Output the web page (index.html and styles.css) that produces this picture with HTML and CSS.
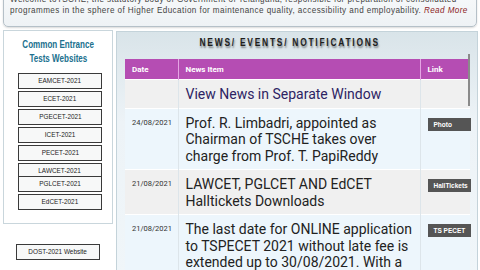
FILE: index.html
```html
<!DOCTYPE html>
<html lang="en">
<head>
  <meta charset="UTF-8" />
  <meta name="viewport" content="width=device-width, initial-scale=1.0" />
  <title>TSCHE - News</title>
  <link rel="stylesheet" href="styles.css">
</head>
<body>

<div class="welcome">
  <p>Welcome toTSCHE, the statutory body of Government of Telangana, responsible for preparation of consolidated<br>programmes in the sphere of Higher Education for maintenance quality, accessibility and employability. <a href="#" class="read-more">Read More</a></p>
</div>

<div class="page">
  <aside class="side">
    <div class="cet-box">
      <h3><span>Common Entrance</span><br><span>Tests Websites</span></h3>
      <a href="#" class="cet-btn"><span>EAMCET-2021</span></a>
      <a href="#" class="cet-btn"><span>ECET-2021</span></a>
      <a href="#" class="cet-btn"><span>PGECET-2021</span></a>
      <a href="#" class="cet-btn"><span>ICET-2021</span></a>
      <a href="#" class="cet-btn"><span>PECET-2021</span></a>
      <a href="#" class="cet-btn lawcet"><span>LAWCET-2021</span></a>
      <a href="#" class="cet-btn"><span>PGLCET-2021</span></a>
      <a href="#" class="cet-btn"><span>EdCET-2021</span></a>
    </div>
    <a href="#" class="cet-btn dost"><span>DOST-2021 Website</span></a>
  </aside>

  <main class="news">
    <h2><span>NEWS/ EVENTS/ NOTIFICATIONS</span></h2>
    <div class="news-scroll">
      <table>
        <colgroup>
          <col class="col-date">
          <col>
          <col class="col-link">
        </colgroup>
        <thead>
          <tr>
            <th>Date</th>
            <th>News Item</th>
            <th>Link</th>
          </tr>
        </thead>
        <tbody>
          <tr class="row-gray">
            <td></td>
            <td class="item"><a href="#" class="separate">View News in Separate Window</a></td>
            <td></td>
          </tr>
          <tr class="row-blue">
            <td class="date">24/08/2021</td>
            <td class="item">Prof. R. Limbadri, appointed as Chairman of TSCHE takes over charge from Prof. T. PapiReddy</td>
            <td class="link"><a href="#" class="badge">Photo</a></td>
          </tr>
          <tr class="row-gray">
            <td class="date">21/08/2021</td>
            <td class="item">LAWCET, PGLCET AND EdCET Halltickets Downloads</td>
            <td class="link"><a href="#" class="badge">HallTickets</a></td>
          </tr>
          <tr class="row-blue">
            <td class="date">21/08/2021</td>
            <td class="item">The last date for ONLINE application to TSPECET 2021 without late fee is extended up to 30/08/2021. With a late fee of Rs.500/- up to 02/09/2021.</td>
            <td class="link"><a href="#" class="badge">TS PECET</a></td>
          </tr>
        </tbody>
      </table>
      <span class="scroll-thumb"></span>
    </div>
  </main>
</div>

</body>
</html>
```

FILE: styles.css
```css
html,
body {
  margin: 0;
  height: 270px;
  overflow: hidden;
}

body {
  background: #ffffff;
  font-family: 'Liberation Sans', Arial, sans-serif;
}

/* top welcome strip (scrolled, so its first line is cut) */
.welcome {
  margin: -12px 3px 0;
  padding: 4px 8px 11px 6px;
  border: 1px solid #b5c0c8;
  border-radius: 0 0 5px 5px;
  background: linear-gradient(#f8fafb, #eef2f5);
  box-shadow: 0 1px 2px rgba(0, 0, 0, 0.15);
  overflow: hidden;
}

.welcome p {
  margin: 0;
  font-size: 9.5px;
  line-height: 11px;
  letter-spacing: 0.5px;
  color: #444;
  white-space: nowrap;
  transform: scaleX(0.853);
  transform-origin: left center;
}

.read-more {
  color: #8b2323;
  font-style: italic;
  text-decoration: none;
}

.page {
  display: flex;
  gap: 3px;
  padding: 3px 2px 0 3px;
}

.side {
  width: 110px;
  flex: none;
}

.cet-box {
  border: 1px solid #c9d6dc;
  background: #ffffff;
  padding: 6px 10px 11px 14px;
}

.cet-box h3 {
  margin: 0 -10px 8px -14px;
  font-size: 11.5px;
  line-height: 14px;
  text-align: center;
  white-space: nowrap;
  color: #20708e;
}

.cet-box h3 span,
.cet-btn span,
.news h2 span {
  display: inline-block;
}

.cet-box h3 span {
  transform: scaleX(0.7);
}

.cet-btn {
  display: block;
  width: 84px;
  height: 16px;
  box-sizing: border-box;
  margin-bottom: 2px;
  border: 1px solid #3a3a3a;
  background: #f7f8f8;
  font-size: 8px;
  line-height: 14px;
  text-align: center;
  white-space: nowrap;
  color: #222;
  text-decoration: none;
}

.cet-btn span {
  transform: scaleX(0.8);
}

.cet-btn.lawcet {
  margin-bottom: -3px;
}

.cet-btn.dost {
  margin: 20px 0 0 13px;
}

/* news panel */
.news {
  flex: 1;
  margin-top: 1px;
  border: 1px solid #c4d3da;
  background: linear-gradient(#d9e4e9, #edf3f7 90px, #f1f7fa);
  min-height: 300px;
}

.news h2 {
  margin: 0 0 10px;
  padding: 3px 14px 0 0;
  font-size: 10.5px;
  line-height: 14px;
  text-align: center;
  white-space: nowrap;
  color: #1e1e1e;
}

.news h2 span {
  letter-spacing: 2.2px;
  transform: scaleX(0.8);
  text-shadow: 1px 2px 2px rgba(0, 0, 0, 0.45);
}

.news-scroll {
  position: relative;
  margin: 0 7px 0 8px;
}

table {
  width: 100%;
  table-layout: fixed;
  border-collapse: collapse;
  font-family: Roboto, 'Liberation Sans', sans-serif;
}

.col-date {
  width: 53px;
}

.col-link {
  width: 50px;
}

th {
  height: 20px;
  padding: 0 7px;
  background: #b54db3;
  border-left: 1px solid #e5a5e4;
  color: #ffffff;
  font-size: 8px;
  font-weight: bold;
  text-align: left;
}

th:first-child {
  border-left: none;
}

td {
  vertical-align: top;
  padding: 6px 5px 5px 7px;
  border-top: 1px solid #ffffff;
  border-left: 1px solid #dde5ea;
}

td:first-child {
  border-left: none;
}

.row-gray {
  background: #f0f0f0;
}

.row-blue {
  background: #edf6fc;
}

.date {
  padding-top: 9px;
  font-size: 7.5px;
  line-height: 9px;
  color: #333;
}

.item {
  font-size: 14px;
  line-height: 16.5px;
  color: #222;
}

.separate {
  color: #2d2363;
  text-decoration: none;
}

.link {
  padding: 9px 0 0 7px;
}

.badge {
  display: block;
  width: 43px;
  height: 13px;
  box-sizing: border-box;
  padding-left: 6px;
  background: #555555;
  color: #ffffff;
  font-family: 'Liberation Sans', Arial, sans-serif;
  font-size: 6.5px;
  font-weight: bold;
  line-height: 13px;
  text-decoration: none;
  white-space: nowrap;
}

.scroll-thumb {
  position: absolute;
  top: -5px;
  right: 0;
  width: 2px;
  height: 52px;
  background: #8a8a8a;
}
```
